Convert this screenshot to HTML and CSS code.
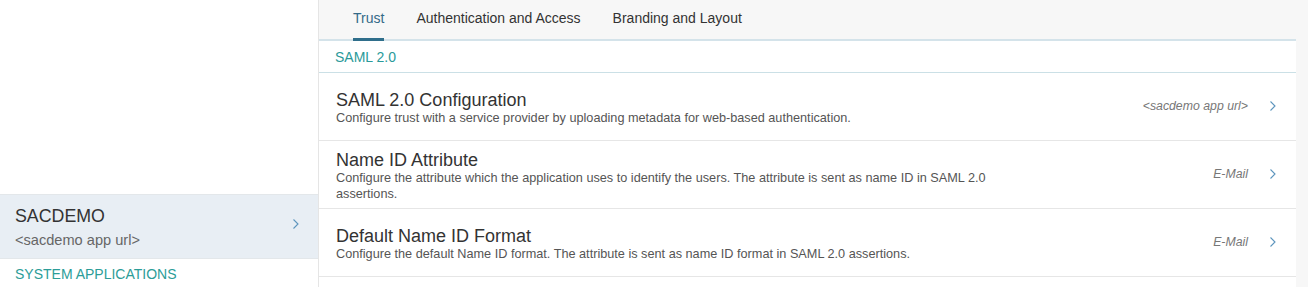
FILE: index.html
```html
<!DOCTYPE html>
<html>
<head>
<meta charset="utf-8">
<link rel="stylesheet" href="styles.css">
</head>
<body>
<div class="app">
  <aside class="sidebar">
    <div class="sidebar-spacer"></div>
    <div class="app-item selected">
      <div class="app-text">
        <div class="app-name">SACDEMO</div>
        <div class="app-url">&lt;sacdemo app url&gt;</div>
      </div>
      <svg class="chev" width="8" height="12" viewBox="0 0 8 12"><path d="M1.5 1.5 L6 6 L1.5 10.5" fill="none" stroke="currentColor" stroke-width="1.1"/></svg>
    </div>
    <div class="group-title">SYSTEM APPLICATIONS</div>
  </aside>
  <main class="main">
    <nav class="tabs">
      <div class="tab active">Trust</div>
      <div class="tab">Authentication and Access</div>
      <div class="tab">Branding and Layout</div>
    </nav>
    <section class="content">
      <div class="section-title">SAML 2.0</div>
      <div class="row">
        <div class="row-text">
          <div class="row-title">SAML 2.0 Configuration</div>
          <div class="row-desc">Configure trust with a service provider by uploading metadata for web-based authentication.</div>
        </div>
        <div class="row-value">&lt;sacdemo app url&gt;</div>
        <svg class="chev" width="8" height="12" viewBox="0 0 8 12"><path d="M1.5 1.5 L6 6 L1.5 10.5" fill="none" stroke="currentColor" stroke-width="1.1"/></svg>
      </div>
      <div class="row">
        <div class="row-text">
          <div class="row-title">Name ID Attribute</div>
          <div class="row-desc">Configure the attribute which the application uses to identify the users. The attribute is sent as name ID in SAML 2.0 assertions.</div>
        </div>
        <div class="row-value">E-Mail</div>
        <svg class="chev" width="8" height="12" viewBox="0 0 8 12"><path d="M1.5 1.5 L6 6 L1.5 10.5" fill="none" stroke="currentColor" stroke-width="1.1"/></svg>
      </div>
      <div class="row">
        <div class="row-text">
          <div class="row-title">Default Name ID Format</div>
          <div class="row-desc">Configure the default Name ID format. The attribute is sent as name ID format in SAML 2.0 assertions.</div>
        </div>
        <div class="row-value">E-Mail</div>
        <svg class="chev" width="8" height="12" viewBox="0 0 8 12"><path d="M1.5 1.5 L6 6 L1.5 10.5" fill="none" stroke="currentColor" stroke-width="1.1"/></svg>
      </div>
    </section>
  </main>
</div>
</body>
</html>
```
FILE: styles.css
```css
html, body {
  margin: 0;
  padding: 0;
  height: 100%;
  overflow: hidden;
}
body {
  font-family: "Liberation Sans", Arial, sans-serif;
  color: #333;
  background: #f7f7f7;
}
.app {
  display: flex;
  height: 287px;
}
.sidebar {
  width: 318px;
  flex: none;
  background: #fff;
  border-right: 1px solid #e5e5e5;
  display: flex;
  flex-direction: column;
}
.sidebar-spacer {
  height: 194px;
  flex: none;
}
.app-item {
  height: 63px;
  border-top: 1px solid #e3e7ea;
  border-bottom: 1px solid #e3e7ea;
  display: flex;
  align-items: center;
  padding: 0 18px 0 15px;
}
.app-item.selected {
  background: #e8eef4;
}
.app-text {
  flex: 1;
}
.app-name {
  font-size: 17.8px;
  line-height: 22px;
  color: #333;
}
.app-url {
  margin-top: 4px;
  font-size: 14.6px;
  line-height: 18px;
  color: #666;
}
.chev {
  color: #5d95bd;
  flex: none;
  display: block;
}
.app-item .chev {
  margin-top: -6px;
}
.group-title {
  padding: 7px 0 0 15px;
  font-size: 14px;
  line-height: 16px;
  color: #2c9d98;
}
.main {
  flex: 1;
  display: flex;
  flex-direction: column;
  padding-right: 12px;
  min-width: 0;
}
.tabs {
  display: flex;
  height: 39px;
  padding-left: 18px;
  border-bottom: 2px solid #d4e3ea;
}
.tab {
  padding: 0 16px;
  font-size: 14px;
  line-height: 36px;
  color: #333;
  position: relative;
}
.tab.active {
  color: #346a88;
}
.tab.active::after {
  content: "";
  position: absolute;
  left: 16px;
  right: 16px;
  bottom: -2px;
  height: 3px;
  background: #2f6e8b;
}
.content {
  background: #fff;
  flex: 1;
}
.section-title {
  height: 31px;
  line-height: 32px;
  padding-left: 16px;
  font-size: 14px;
  color: #2a9a9a;
  border-bottom: 1px solid #cbe0e6;
}
.row {
  box-sizing: border-box;
  min-height: 68px;
  display: flex;
  align-items: center;
  padding: 2px 19px 0 17px;
  border-bottom: 1px solid #e6e6e6;
}
.row-text {
  flex: 1;
  min-width: 0;
}
.row-title {
  font-size: 18px;
  line-height: 20px;
  color: #333;
}
.row-desc {
  font-size: 12.7px;
  line-height: 16px;
  color: #555;
  max-width: 680px;
}
.row-value {
  font-size: 12.3px;
  font-style: italic;
  color: #777;
  margin-right: 21px;
  margin-top: -3px;
}
.row .chev {
  margin-top: -3px;
}
```
